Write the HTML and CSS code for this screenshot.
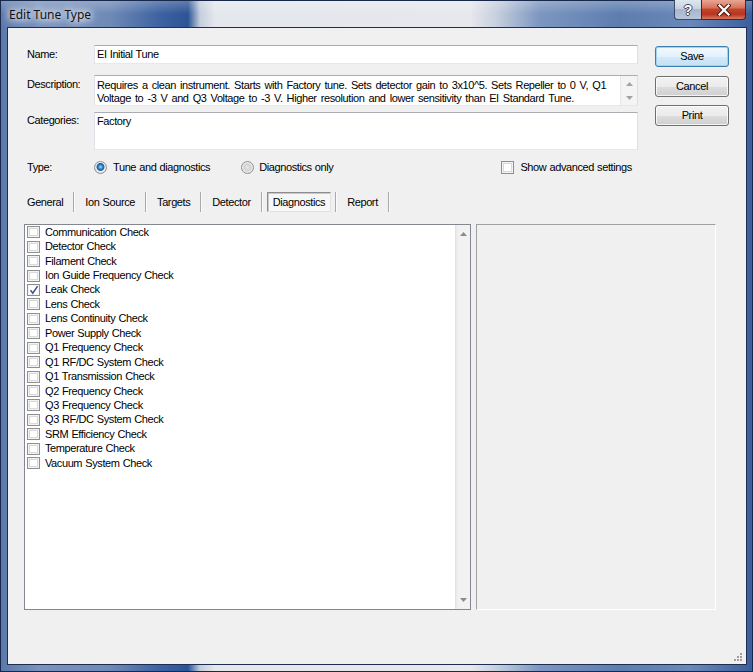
FILE: index.html
```html
<!DOCTYPE html>
<html>
<head>
<meta charset="utf-8">
<link rel="stylesheet" href="styles.css">
</head>
<body>
<div class="window">
  <div class="titlebar">
    <div class="title">Edit Tune Type</div>
    <div class="caption-btns">
      <div class="cbtn help"><span>?</span></div>
      <div class="cbtn close">
        <svg width="14" height="12" viewBox="0 0 14 12"><path d="M2.5 1.5 L11.5 10.5 M11.5 1.5 L2.5 10.5" stroke="#4a1a12" stroke-width="4.2" stroke-linecap="square"/><path d="M2.5 1.5 L11.5 10.5 M11.5 1.5 L2.5 10.5" stroke="#fff" stroke-width="2.2" stroke-linecap="square"/></svg>
      </div>
    </div>
  </div>
  <div class="client">
    <div class="top">
      <div class="form">
        <div class="lbl lbl-name">Name:</div>
        <div class="field input name">EI Initial Tune</div>

        <div class="lbl lbl-desc">Description:</div>
        <div class="field textbox desc">
          <div class="desc-text">
            <div class="line">Requires a clean instrument. Starts with Factory tune. Sets detector gain to 3x10^5. Sets Repeller to 0 V, Q1</div>
            <div class="line">Voltage to -3 V and Q3 Voltage to -3 V. Higher resolution and lower sensitivity than EI Standard Tune.</div>
          </div>
          <div class="mini-scroll">
            <svg width="7" height="4" viewBox="0 0 7 4"><polygon points="3.5,0 7,4 0,4" fill="#a3a3a3"/></svg>
            <svg width="7" height="4" viewBox="0 0 7 4"><polygon points="0,0 7,0 3.5,4" fill="#a3a3a3"/></svg>
          </div>
        </div>

        <div class="lbl lbl-cat">Categories:</div>
        <div class="field textbox cat">Factory</div>

        <div class="lbl lbl-type">Type:</div>
        <div class="type-row">
          <span class="radio on"></span><span class="opt-text">Tune and diagnostics</span>
          <span class="radio second"></span><span class="opt-text">Diagnostics only</span>
          <span class="check adv"></span><span class="opt-text">Show advanced settings</span>
        </div>
      </div>
      <div class="buttons">
        <div class="btn default">Save</div>
        <div class="btn cancel">Cancel</div>
        <div class="btn print">Print</div>
      </div>
    </div>

    <div class="tabs">
      <div class="tab">General</div><div class="sep"></div>
      <div class="tab">Ion Source</div><div class="sep"></div>
      <div class="tab">Targets</div><div class="sep"></div>
      <div class="tab">Detector</div><div class="sep"></div>
      <div class="tab selected">Diagnostics</div><div class="sep"></div>
      <div class="tab">Report</div><div class="sep"></div>
    </div>

    <div class="panes">
      <div class="listbox">
        <ul class="items">
          <li class="item"><span class="check"></span>Communication Check</li>
          <li class="item"><span class="check"></span>Detector Check</li>
          <li class="item"><span class="check"></span>Filament Check</li>
          <li class="item"><span class="check"></span>Ion Guide Frequency Check</li>
          <li class="item"><span class="check checked"><svg width="10" height="10" viewBox="0 0 10 10"><path d="M1.5 5.2 L3.8 8.2 L8.6 1.2" fill="none" stroke="#3d4f8a" stroke-width="1.5"/></svg></span>Leak Check</li>
          <li class="item"><span class="check"></span>Lens Check</li>
          <li class="item"><span class="check"></span>Lens Continuity Check</li>
          <li class="item"><span class="check"></span>Power Supply Check</li>
          <li class="item"><span class="check"></span>Q1 Frequency Check</li>
          <li class="item"><span class="check"></span>Q1 RF/DC System Check</li>
          <li class="item"><span class="check"></span>Q1 Transmission Check</li>
          <li class="item"><span class="check"></span>Q2 Frequency Check</li>
          <li class="item"><span class="check"></span>Q3 Frequency Check</li>
          <li class="item"><span class="check"></span>Q3 RF/DC System Check</li>
          <li class="item"><span class="check"></span>SRM Efficiency Check</li>
          <li class="item"><span class="check"></span>Temperature Check</li>
          <li class="item"><span class="check"></span>Vacuum System Check</li>
        </ul>
        <div class="vscroll">
          <svg width="7" height="4" viewBox="0 0 7 4"><polygon points="3.5,0 7,4 0,4" fill="#8c8c8c"/></svg>
          <svg width="7" height="4" viewBox="0 0 7 4"><polygon points="0,0 7,0 3.5,4" fill="#8c8c8c"/></svg>
        </div>
      </div>
      <div class="detail"></div>
    </div>

    <div class="grip">
      <svg width="10" height="10" viewBox="0 0 10 10">
        <rect x="7" y="1" width="2" height="2" fill="#a0a0a0"/>
        <rect x="4" y="4" width="2" height="2" fill="#a0a0a0"/>
        <rect x="7" y="4" width="2" height="2" fill="#a0a0a0"/>
        <rect x="1" y="7" width="2" height="2" fill="#a0a0a0"/>
        <rect x="4" y="7" width="2" height="2" fill="#a0a0a0"/>
        <rect x="7" y="7" width="2" height="2" fill="#a0a0a0"/>
      </svg>
    </div>
  </div>
</div>
</body>
</html>
```

FILE: styles.css
```css
* { box-sizing: border-box; }
html, body { margin: 0; padding: 0; }
body {
  width: 753px;
  height: 672px;
  overflow: hidden;
  font-family: "Liberation Sans", Arial, sans-serif;
  font-size: 11px;
  letter-spacing: -0.4px;
  word-spacing: 0.5px;
  color: #000;
  background: #fff;
}

.window {
  width: 753px;
  height: 672px;
  padding: 0 7px 8px 8px;
  display: flex;
  flex-direction: column;
  background:
    linear-gradient(to bottom, rgba(255,255,255,0.25) 0, rgba(255,255,255,0) 14px),
    linear-gradient(to right, #5a78aa 0, #7b93bd 40px, #6f8ab7 110px, #3d62a0 160px, #2c5495 188px, #c4cedd 200px, #e4e7ec 215px, #e6e8ec 470px, #c8d1df 495px, #7c96c0 540px, #5d7db0 620px, #6a88b8 690px, #3b5e9c 753px);
  box-shadow: inset 0 0 0 1px #17284a;
}

.titlebar {
  height: 28px;
  display: flex;
  justify-content: space-between;
  align-items: flex-start;
}
.title {
  font-family: "Noto Sans", "Open Sans", sans-serif;
  font-size: 12px;
  letter-spacing: 0;
  word-spacing: 0;
  line-height: 16px;
  padding: 7px 0 0 1px;
  color: #111;
  text-shadow: 0 0 6px #fff, 0 0 10px #fff, 0 0 12px rgba(255,255,255,0.9);
}
.caption-btns {
  display: flex;
}
.cbtn {
  height: 20px;
  display: flex;
  align-items: center;
  justify-content: center;
  border: 1px solid #3a4a68;
  border-top: none;
}
.help {
  width: 27px;
  border-radius: 0 0 0 4px;
  background: linear-gradient(to bottom, #dfe6ef 0, #c8d2e0 45%, #a9b7cc 50%, #b7c5da 100%);
  border-right: none;
}
.help span {
  font-family: "Liberation Sans", Arial, sans-serif;
  font-weight: bold;
  font-size: 14px;
  letter-spacing: 0;
  color: #fff;
  text-shadow: 1px 0 0 #3a4558, -1px 0 0 #3a4558, 0 1px 0 #3a4558, 0 -1px 0 #3a4558;
  line-height: 14px;
  margin-top: 1px;
}
.close {
  width: 45px;
  border-radius: 0 0 4px 0;
  border-color: #5a1e16;
  background: linear-gradient(to bottom, #e8a693 0, #d8735d 40%, #c2432b 50%, #b8351d 75%, #d87a5f 100%);
}

.client {
  flex: 1;
  border: 1px solid #eef0f3;
  box-shadow: 0 0 0 1px #1d2e50;
  background: #f0f0f0;
  display: flex;
  flex-direction: column;
  position: relative;
}

.top {
  display: flex;
  padding: 16px 0 0 18px;
}
.form {
  display: grid;
  grid-template-columns: 67px 544px;
}
.lbl {
  line-height: 13px;
}
.lbl-name { padding-top: 3px; }
.lbl-type { align-self: center; }
.lbl-desc { padding-top: 3px; }
.lbl-cat { padding-top: 2px; }

.field {
  background: #fff;
  border: 1px solid;
  border-color: #abadb3 #dbdfe6 #e3e9ef #e2e3ea;
  line-height: 13px;
}
.input {
  height: 19px;
  padding: 2px 2px 0;
  margin-bottom: 11px;
}
.textbox {
  padding: 2px 0 0 2px;
}
.desc {
  height: 31px;
  margin-bottom: 6px;
  display: flex;
  padding-top: 2px;
  padding-right: 0;
}
.desc-text {
  flex: 1;
  white-space: nowrap;
  overflow: hidden;
  padding-top: 1px;
  word-spacing: 1.4px;
}
.mini-scroll {
  width: 17px;
  margin: -2px 0 0;
  background: #f4f4f4;
  border-left: 1px solid #e6e6e6;
  display: flex;
  flex-direction: column;
  justify-content: space-between;
  align-items: center;
  padding: 6px 0 5px;
}
.cat {
  height: 38px;
  margin-bottom: 10px;
}

.type-row {
  height: 15px;
  display: flex;
  align-items: center;
}
.opt-text { line-height: 13px; }
.radio {
  width: 13px;
  height: 13px;
  border-radius: 50%;
  border: 1px solid #8e8f8f;
  background: radial-gradient(circle at 50% 50%, #e9e9e9 0, #d2d2d2 3px, #f4f4f4 6px);
  margin-right: 6px;
  flex: none;
}
.radio.on {
  background: radial-gradient(circle at 50% 45%, #b9e6ff 0, #3ea0e6 1.5px, #1b6bb5 3px, #2c5f96 3.6px, #f4f4f4 4.4px, #dcdcdc 6px);
}
.radio.second { margin-left: 31px; margin-right: 5px; }

.check {
  width: 13px;
  height: 13px;
  border: 1px solid #8e8f8f;
  background: #fff;
  box-shadow: inset 0 0 0 1px #f3f3f3, inset 0 0 0 2px #d9d9d9;
  flex: none;
  display: flex;
  align-items: center;
  justify-content: center;
}
.check.checked {
  box-shadow: inset 0 0 0 1px #f3f3f3;
}
.check.adv {
  margin-left: 168px;
  margin-right: 6px;
}

.buttons {
  margin-left: 17px;
  width: 74px;
  display: flex;
  flex-direction: column;
  padding-top: 1px;
}
.btn {
  height: 21px;
  border: 1px solid #707070;
  border-radius: 3px;
  background: linear-gradient(to bottom, #f2f2f2 0, #ebebeb 50%, #dddddd 51%, #cfcfcf 100%);
  box-shadow: inset 0 0 0 1px rgba(255,255,255,0.75);
  display: flex;
  align-items: center;
  justify-content: center;
  line-height: 13px;
}
.btn.default {
  border-color: #3c7fb1;
  background: linear-gradient(to bottom, #f3f9fd 0, #e3f1fb 50%, #d3e9f8 51%, #c4e1f5 100%);
  box-shadow: inset 0 0 0 1px #9fd3f2;
}
.btn.cancel { margin-top: 9px; }
.btn.print { margin-top: 8px; }

.tabs {
  display: flex;
  margin-top: 17px;
  padding-left: 12px;
  height: 20px;
}
.tab {
  padding: 0 5px;
  border: 1px solid transparent;
  line-height: 18px;
}
.tab.selected {
  border-color: #8d8d8d #e2e2e2 #e2e2e2 #8d8d8d;
  background: #f7f7f7;
  box-shadow: inset 1px 1px 0 #c8c8c8;
}
.sep {
  width: 2px;
  border-left: 1px solid #a9a9a9;
  border-right: 1px solid #fbfbfb;
  margin: 0 4px 0 4px;
}

.panes {
  display: flex;
  margin-top: 12px;
  padding-left: 15px;
  gap: 5px;
  height: 386px;
}
.listbox {
  width: 447px;
  border: 1px solid #828790;
  background: #fff;
  display: flex;
}
.items {
  flex: 1;
  list-style: none;
  margin: 0;
  padding: 0 0 0 2px;
}
.item {
  height: 14.44px;
  display: flex;
  align-items: center;
  line-height: 13px;
  white-space: nowrap;
}
.item .check {
  margin-right: 5px;
  width: 13px;
  height: 12px;
}
.vscroll {
  width: 15px;
  background: linear-gradient(to right, #e9e9e9 0, #f2f2f2 3px, #f2f2f2 100%);
  border-left: 1px solid #e3e3e3;
  display: flex;
  flex-direction: column;
  justify-content: space-between;
  align-items: center;
  padding: 7px 0 7px;
}
.detail {
  width: 240px;
  border: 1px solid;
  border-color: #a0a0a0 #ffffff #ffffff #a0a0a0;
  background: #f0f0f0;
}

.grip {
  position: absolute;
  right: 2px;
  bottom: 1px;
  width: 10px;
  height: 10px;
}
.grip svg { display: block; }
```
